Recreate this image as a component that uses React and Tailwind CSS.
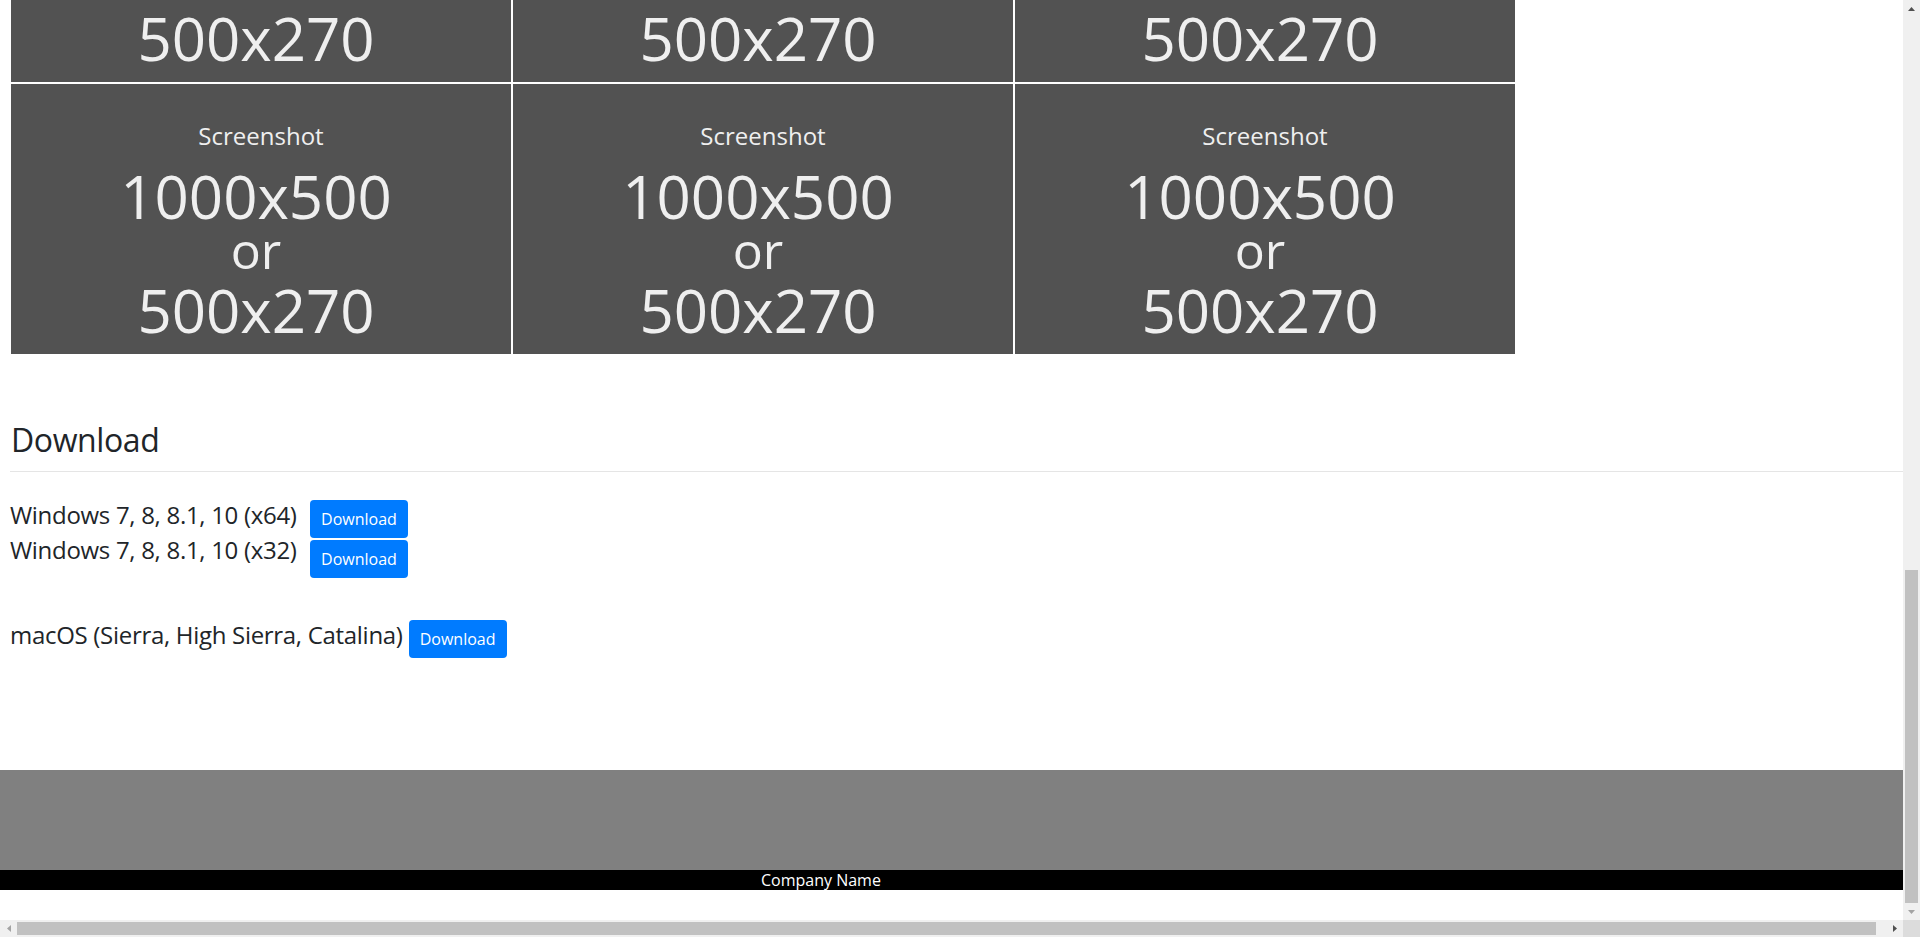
import React from 'react';

const TILE_ROWS = [
  { clip: true, tiles: [0, 1, 2] },
  { clip: false, tiles: [0, 1, 2] },
];

const DOWNLOADS_WIN = ['Windows 7, 8, 8.1, 10 (x64)', 'Windows 7, 8, 8.1, 10 (x32)'];

function Tile() {
  return (
    <div className="w-[500px] h-[270px] shrink-0 bg-[#525252] text-[#efefef] flex flex-col items-center overflow-hidden">
      <div className="pt-[32px] text-[24px] leading-[40px]">Screenshot</div>
      <div className="pr-[10px] text-[60px] leading-[81px]">1000x500</div>
      <div className="pr-[10px] text-[50px] leading-[26px]">or</div>
      <div className="pr-[10px] text-[60px] leading-[95px]">500x270</div>
    </div>
  );
}

function DownloadButton() {
  return (
    <button className="w-[98px] h-[38px] shrink-0 rounded-[4px] bg-[#007bff] text-white text-[16px] leading-[24px]">
      Download
    </button>
  );
}

function Arrow({ dir, dark }) {
  const color = dark ? '#505050' : '#a3a3a3';
  const pts = {
    up: '0,4 3.5,0 7,4',
    down: '0,0 3.5,4 7,0',
    left: '4,0 0,3.5 4,7',
    right: '0,0 4,3.5 0,7',
  }[dir];
  const vertical = dir === 'up' || dir === 'down';
  return (
    <svg width={vertical ? 7 : 4} height={vertical ? 4 : 7} viewBox={vertical ? '0 0 7 4' : '0 0 4 7'}>
      <polygon points={pts} fill={color} />
    </svg>
  );
}

export default function App() {
  return (
    <div
      className="w-[1920px] h-[937px] flex flex-col overflow-hidden bg-white text-[#212529]"
      style={{ fontFamily: '"Open Sans", "Noto Sans", sans-serif' }}
    >
      <div className="flex flex-1 min-h-0">
        {/* page */}
        <div className="w-[1903px] h-[920px] flex flex-col overflow-hidden">
          <div className="pl-[11px] flex flex-col gap-[2px]">
            {TILE_ROWS.map((row, i) => (
              <div
                key={i}
                className={row.clip ? 'h-[82px] overflow-hidden flex items-end gap-[2px]' : 'flex gap-[2px]'}
              >
                {row.tiles.map((t) => (
                  <Tile key={t} />
                ))}
              </div>
            ))}
          </div>

          <div className="pl-[10px]">
            <h2 className="mt-[67px] h-[38px] text-[32px] leading-[38px] font-medium tracking-[-0.4px] pl-[1px]">
              Download
            </h2>
            <hr className="mt-[12px] border-0 border-t border-[#e5e5e5]" />

            <div className="mt-[25px] flex items-start">
              <div className="w-[300px] text-[24px] leading-[35px] font-medium tracking-[-0.3px]">
                {DOWNLOADS_WIN.map((d) => (
                  <div key={d}>{d}</div>
                ))}
              </div>
              <div className="mt-[3px] flex flex-col gap-[2px]">
                <DownloadButton />
                <DownloadButton />
              </div>
            </div>

            <div className="mt-[42px] flex items-start gap-[6px]">
              <div className="text-[24px] leading-[30px] font-medium tracking-[-0.3px]">
                macOS (Sierra, High Sierra, Catalina)
              </div>
              <DownloadButton />
            </div>
          </div>

          <footer className="mt-[112px]">
            <div className="h-[100px] bg-[#808080]" />
            <div className="h-[20px] bg-black text-white text-[16px] leading-[20px] pl-[761px]">Company Name</div>
          </footer>
        </div>

        {/* vertical scrollbar */}
        <div className="w-[17px] flex flex-col bg-[#f0f0f0]">
          <div className="h-[17px] flex items-center justify-center">
            <Arrow dir="up" dark />
          </div>
          <div className="flex-1 flex flex-col justify-end">
            <div className="h-[333px] mx-[2px] bg-[#c1c1c1]" />
          </div>
          <div className="h-[17px] flex items-center justify-center">
            <Arrow dir="down" />
          </div>
        </div>
      </div>

      {/* horizontal scrollbar */}
      <div className="h-[17px] flex bg-[#f0f0f0]">
        <div className="w-[17px] flex items-center justify-center">
          <Arrow dir="left" />
        </div>
        <div className="flex-1 flex items-center">
          <div className="w-[1859px] h-[13px] bg-[#c1c1c1]" />
        </div>
        <div className="w-[17px] flex items-center justify-center">
          <Arrow dir="right" dark />
        </div>
        <div className="w-[17px] bg-[#dcdcdc]" />
      </div>
    </div>
  );
}
